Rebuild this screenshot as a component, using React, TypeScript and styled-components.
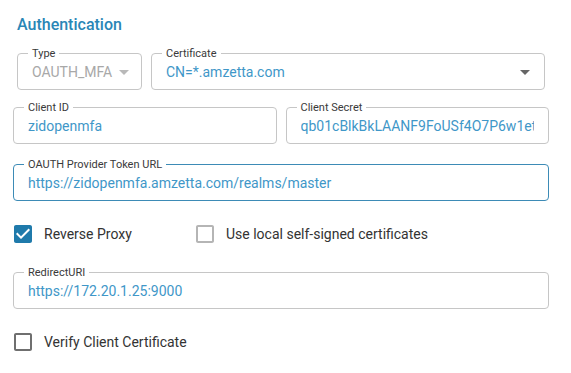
import React from "react";
import styled, { createGlobalStyle } from "styled-components";

const GlobalStyle = createGlobalStyle`
  body {
    margin: 0;
    background: #fff;
    font-family: Roboto, "Liberation Sans", sans-serif;
  }
`;

const Form = styled.section`
  display: flex;
  flex-direction: column;
  padding: 15px 22px 0 13px;
  width: 571px;
  box-sizing: border-box;
`;

const Title = styled.h2`
  margin: 0 0 18px 4px;
  font-size: 16px;
  line-height: 20px;
  font-weight: 500;
  color: #2a86b6;
`;

const Row = styled.div<{ $cols: string; $mt?: number; $inset?: number }>`
  display: grid;
  grid-template-columns: ${(p) => p.$cols};
  gap: 9px;
  margin-top: ${(p) => p.$mt || 0}px;
  padding: 0 ${(p) => p.$inset || 0}px;
`;

const Field = styled.div<{ $focused?: boolean; $disabled?: boolean }>`
  position: relative;
  height: 37px;
  box-sizing: border-box;
  border: 1px solid ${(p) => (p.$focused ? "#3d8bb6" : "#c6c6c6")};
  border-radius: 4px;
  display: flex;
  align-items: center;
  padding: 0 7px 0 14px;
  color: ${(p) => (p.$disabled ? "#a8a8a8" : "#3f97c8")};
  font-size: 14px;
`;

const Legend = styled.span`
  position: absolute;
  top: -7px;
  left: 10px;
  padding: 0 4px;
  background: #fff;
  font-size: 11px;
  line-height: 13px;
  color: #3a3a3a;
`;

const Value = styled.input`
  flex: 1;
  min-width: 0;
  border: none;
  outline: none;
  padding: 0 7px 0 0;
  background: transparent;
  font: inherit;
  color: inherit;
`;

const SelectText = styled.span`
  flex: 1;
  white-space: nowrap;
`;

const Arrow = styled.svg<{ $disabled?: boolean }>`
  width: 24px;
  height: 24px;
  fill: ${(p) => (p.$disabled ? "#b9b9b9" : "#666")};
  flex: none;
`;

const CheckRow = styled.div<{ $mt: number }>`
  display: flex;
  align-items: center;
  margin-top: ${(p) => p.$mt}px;
  margin-left: -2px;
`;

const CheckItem = styled.label<{ $width?: number }>`
  display: flex;
  align-items: center;
  gap: 9px;
  width: ${(p) => (p.$width ? `${p.$width}px` : "auto")};
  font-size: 14px;
  color: #333;
`;

const Box = styled.svg<{ $tone: string }>`
  width: 24px;
  height: 24px;
  fill: ${(p) => p.$tone};
  flex: none;
`;

const DropArrow = ({ disabled }: { disabled?: boolean }) => (
  <Arrow $disabled={disabled} viewBox="0 0 24 24">
    <path d="M7 10l5 5 5-5z" />
  </Arrow>
);

const Check = ({ checked, tone }: { checked?: boolean; tone: string }) => (
  <Box $tone={tone} viewBox="0 0 24 24">
    {checked ? (
      <path d="M19 3H5c-1.11 0-2 .9-2 2v14c0 1.1.89 2 2 2h14c1.11 0 2-.9 2-2V5c0-1.1-.89-2-2-2zm-9 14l-5-5 1.41-1.41L10 14.17l7.59-7.59L19 8l-9 9z" />
    ) : (
      <path d="M19 5v14H5V5h14m0-2H5c-1.1 0-2 .9-2 2v14c0 1.1.9 2 2 2h14c1.1 0 2-.9 2-2V5c0-1.1-.9-2-2-2z" />
    )}
  </Box>
);

export default function App() {
  return (
    <>
      <GlobalStyle />
      <Form>
        <Title>Authentication</Title>
        <Row $cols="125px 1fr" $inset={4}>
          <Field $disabled>
            <Legend>Type</Legend>
            <SelectText>OAUTH_MFA</SelectText>
            <DropArrow disabled />
          </Field>
          <Field>
            <Legend>Certificate</Legend>
            <SelectText>CN=*.amzetta.com</SelectText>
            <DropArrow />
          </Field>
        </Row>
        <Row $cols="1fr 1fr" $mt={17}>
          <Field>
            <Legend>Client ID</Legend>
            <Value readOnly value="zidopenmfa" />
          </Field>
          <Field>
            <Legend>Client Secret</Legend>
            <Value readOnly value="qb01cBlkBkLAANF9FoUSf4O7P6w1etQx3Zk" />
          </Field>
        </Row>
        <Row $cols="1fr" $mt={20}>
          <Field $focused>
            <Legend>OAUTH Provider Token URL</Legend>
            <Value readOnly value="https://zidopenmfa.amzetta.com/realms/master" />
          </Field>
        </Row>
        <CheckRow $mt={21}>
          <CheckItem $width={182}>
            <Check checked tone="#1f7aab" />
            Reverse Proxy
          </CheckItem>
          <CheckItem>
            <Check tone="#b5b5b5" />
            Use local self-signed certificates
          </CheckItem>
        </CheckRow>
        <Row $cols="1fr" $mt={26}>
          <Field>
            <Legend>RedirectURI</Legend>
            <Value readOnly value="https://172.20.1.25:9000" />
          </Field>
        </Row>
        <CheckRow $mt={21}>
          <CheckItem>
            <Check tone="#6f6f6f" />
            Verify Client Certificate
          </CheckItem>
        </CheckRow>
      </Form>
    </>
  );
}
